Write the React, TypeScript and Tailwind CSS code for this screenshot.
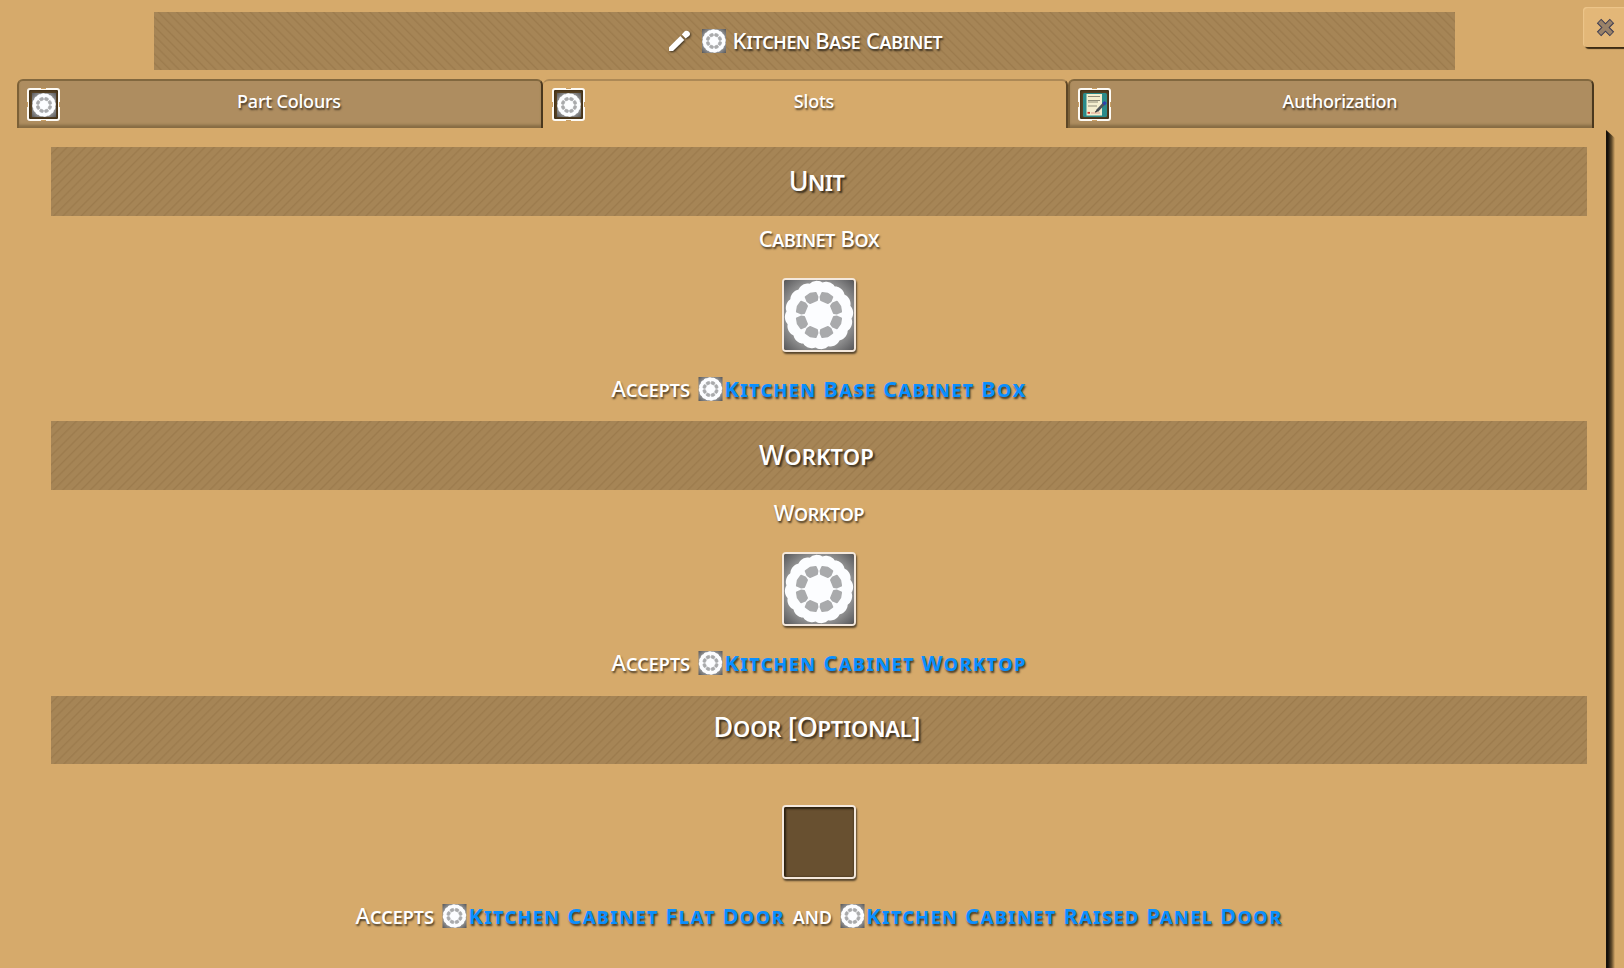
import type { ReactNode } from "react";

const polar = (r: number, deg: number) => {
  const a = (deg * Math.PI) / 180;
  return `${(36 + r * Math.cos(a)).toFixed(2)} ${(36 + r * Math.sin(a)).toFixed(2)}`;
};

const gearOutline =
  "M" +
  Array.from({ length: 192 }, (_, i) => {
    const deg = (i * 360) / 192;
    const r = 33 + 2.2 * Math.sqrt(Math.abs(Math.cos((8 * (deg + 5) * Math.PI) / 180)));
    return polar(r, deg);
  }).join("L") +
  "Z";

const gearSegments = Array.from({ length: 8 }, (_, k) => {
  const s = k * 45;
  return `M${polar(15.4, s + 8)}L${polar(18.6, s + 5)}L${polar(23, s + 8.5)}L${polar(23.6, s + 22.5)}L${polar(23, s + 36.5)}L${polar(18.6, s + 40)}L${polar(15.4, s + 37)}Z`;
}).join("");

function Gear({ className, id }: { className: string; id: string }) {
  return (
    <svg viewBox="0 0 72 72" className={className}>
      <defs>
        <radialGradient id={id} cx="50%" cy="50%" r="70%">
          <stop offset="0.6" stopColor="#a0a0a0" />
          <stop offset="1" stopColor="#58585a" />
        </radialGradient>
      </defs>
      <rect width="72" height="72" fill={`url(#${id})`} />
      <path d={gearOutline} fill="#fcfdff" />
      <path d={gearSegments} fill="#a9aaac" stroke="#a9aaac" strokeWidth="2" strokeLinejoin="round" />
    </svg>
  );
}

function NoteIcon({ className }: { className: string }) {
  return (
    <svg viewBox="0 0 24 24" className={className}>
      <rect width="24" height="24" rx="1.5" fill="#2b8b8a" />
      <path d="M3.500 1H19V22.500H3.500Z" fill="#f4efcf" />
      <path d="M5 3.500H17M5 7.500H17M5 9H15M5 13H14" stroke="#8e8b76" strokeWidth="1" />
      <path d="M4.500 19.800H7" stroke="#d02a20" strokeWidth="1.8" />
      <path d="M8 20H17" stroke="#e3a08c" strokeWidth="1" />
      <path d="M21.500 10L14 18" stroke="#4e5458" strokeWidth="2.600" />
      <path d="M22.600 9L20.500 11.300" stroke="#2f3fae" strokeWidth="3.200" />
      <path d="M14.500 17.300L12.300 19.300" stroke="#333" strokeWidth="1.200" />
    </svg>
  );
}

function TabFrame({ children }: { children: ReactNode }) {
  return (
    <span className="relative flex h-[33px] w-[33px] shrink-0 items-center justify-center rounded-[3px] border-2 border-[#fdfaf4] bg-[#5b4527] shadow-[inset_0_0_3px_1px_#3b2b14]">
      {children}
      <span className="absolute -top-[2px] left-[12px] h-px w-[5px] bg-[#c9a067]" />
      <span className="absolute -bottom-[2px] left-[12px] h-px w-[5px] bg-[#c9a067]" />
      <span className="absolute -left-[2px] top-[12px] h-[5px] w-px bg-[#c9a067]" />
      <span className="absolute -right-[2px] top-[12px] h-[5px] w-px bg-[#c9a067]" />
    </span>
  );
}

function Tab({ label, icon, active }: { label: string; icon: ReactNode; active?: boolean }) {
  return (
    <button
      className={
        active
          ? "flex h-[49px] flex-1 items-start rounded-t-[6px] border-t-2 border-r-2 border-t-[#ad8956] border-r-[#5d4727] pl-[9px] pt-[7px]"
          : "flex h-[49px] flex-1 items-start rounded-t-[6px] border-l-2 border-r-2 border-t-2 border-l-[#7c6138] border-r-[#4a381e] border-t-[#82683f] bg-[#ae8d60] pl-2 pt-[7px] shadow-[inset_0_-4px_3px_-1px_#866b43]"
      }
    >
      <TabFrame>{icon}</TabFrame>
      <span className="flex-1 pr-[23px] text-center text-[18px] font-medium leading-[27px] tracking-[-0.22px] [text-shadow:1px_2px_2px_#00000099]">
        {label}
      </span>
    </button>
  );
}

function Band({ children, className }: { children: ReactNode; className: string }) {
  return (
    <h2
      className={
        "bg-[repeating-linear-gradient(135deg,#a68556_0px,#a68556_3.800px,#9c7b4d_5px,#a68556_6.500px)] text-center text-[27px] font-medium [font-variant-caps:small-caps] [text-shadow:2px_2px_2px_#000000a6] " +
        className
      }
    >
      {children}
    </h2>
  );
}

function Slot({ filled, id }: { filled?: boolean; id: string }) {
  return (
    <div className="mx-auto mb-px h-[74px] w-[74px] overflow-hidden rounded-[4px] border-2 border-[#f4e8dc] bg-[#685030] shadow-[1px_2px_2px_#00000099]">
      {filled ? (
        <Gear id={id} className="h-full w-full" />
      ) : (
        <div className="h-full w-full shadow-[inset_1px_1px_2px_1px_#2c2010]" />
      )}
    </div>
  );
}

function Link({ children, id }: { children: string; id: string }) {
  return (
    <a className="flex items-center">
      <Gear id={id} className="h-6 w-[25px]" />
      <span className="-mt-[2px] pl-px font-bold tracking-[1.12px] text-[#0a8fff]">{children}</span>
    </a>
  );
}

function Accepts({ children }: { children: ReactNode }) {
  return (
    <div className="flex h-[68px] items-center justify-center gap-2 pt-1 text-[22px] [font-variant-caps:small-caps]">
      <span className="-mt-[2px] font-medium tracking-[0.050px]">Accepts</span>
      {children}
    </div>
  );
}

function SlotLabel({ children }: { children: string }) {
  return (
    <div className="mb-4 h-[46px] text-center text-[22px] font-medium leading-[44px] tracking-[-0.35px] [font-variant-caps:small-caps]">
      {children}
    </div>
  );
}

export default function App() {
  return (
    <div className="h-[968px] w-[1624px] overflow-hidden bg-[#d6aa6b] font-['Noto_Sans',sans-serif] text-white [text-shadow:1px_2px_2px_#000000a6]">
      <header className="flex h-[79px] justify-end">
        <h1 className="mt-3 flex h-[58px] w-[1301px] items-center justify-center bg-[repeating-linear-gradient(45deg,#a68556_0px,#a68556_3.800px,#9c7b4d_5px,#a68556_6.500px)] text-[22px] font-medium tracking-[-0.33px] [font-variant-caps:small-caps]">
          <svg viewBox="0 0 24 24" className="mr-[11px] h-6 w-6 drop-shadow-[1px_1px_1px_#000000a6]">
            <path d="M2 22V18.300L13.300 7L17.300 11L6 22Z" fill="#fff" />
            <path d="M14.800 5.600L16.800 3.300C18.800 0.800 22.200 1.800 22.900 4.200C23.300 5.900 22.400 7 21 7.700L18.600 9.400Z" fill="#fff" />
          </svg>
          <Gear id="g-title" className="mr-[7px] h-6 w-6" />
          <span className="-mt-px">Kitchen Base Cabinet</span>
        </h1>
        <div className="ml-32 mt-[7px] h-10 w-[41px] rounded-l-[4px] bg-[#e3b778] pl-[13px] pt-[11px] shadow-[2px_2px_1px_#3d2c14,inset_1px_1px_1px_#edc68b]">
          <svg viewBox="0 0 19 19" className="h-[19px] w-[19px]">
            <path d="M3 3L16 16M16 3L3 16" stroke="#3b3b52" strokeWidth="6.200" />
            <path d="M3.600 3.600L15.400 15.400M15.400 3.600L3.600 15.400" stroke="#9a8268" strokeWidth="4.200" />
          </svg>
        </div>
      </header>

      <nav className="ml-[17px] flex w-[1577px]">
        <Tab label="Part Colours" icon={<Gear id="g-t1" className="h-6 w-6" />} />
        <Tab label="Slots" active icon={<Gear id="g-t2" className="h-6 w-6" />} />
        <Tab label="Authorization" icon={<NoteIcon className="h-6 w-6" />} />
      </nav>

      <div className="flex h-[840px] pl-[51px]">
        <main className="w-[1536px] pt-[19px]">
          <section className="h-[274px]">
            <Band className="h-[69px] pr-[5px] leading-[67px] tracking-[-0.6px]">Unit</Band>
            <SlotLabel>Cabinet Box</SlotLabel>
            <Slot filled id="g-s1" />
            <Accepts>
              <Link id="g-a1">Kitchen Base Cabinet Box</Link>
            </Accepts>
          </section>
          <section className="h-[275px]">
            <Band className="h-[69px] pr-[5px] leading-[67px] tracking-[0.200px]">Worktop</Band>
            <SlotLabel>Worktop</SlotLabel>
            <Slot filled id="g-s2" />
            <Accepts>
              <Link id="g-a2">Kitchen Cabinet Worktop</Link>
            </Accepts>
          </section>
          <section>
            <Band className="mb-[41px] h-[68px] pr-1 leading-[61px] tracking-[-0.250px]">
              Door <span className="[font-variant-caps:normal]">[</span>Optional
              <span className="[font-variant-caps:normal]">]</span>
            </Band>
            <Slot id="g-s3" />
            <Accepts>
              <Link id="g-a3">Kitchen Cabinet Flat Door</Link>
              <span className="-mt-[2px] font-medium">and</span>
              <Link id="g-a4">Kitchen Cabinet Raised Panel Door</Link>
            </Accepts>
          </section>
        </main>
        <div className="ml-[19px] mt-[2px] w-[9px] bg-linear-to-r from-[#15100a] from-20% via-[#5d4828] via-60% to-[#d5a96a] [clip-path:polygon(0_0,100%_8px,100%_100%,0_100%)]" />
      </div>
    </div>
  );
}
